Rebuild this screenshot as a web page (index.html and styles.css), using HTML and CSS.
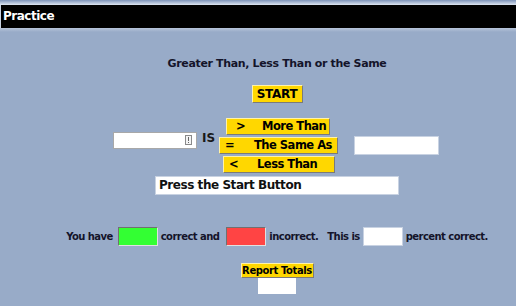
FILE: index.html
```html
<html>
    <head>
        <title>Practice</title>
        <link rel="stylesheet" href="styles.css">
    </head>
    <body>
        <div class="topStrip"></div>
        <div class="titleBar">Practice</div>
        <div class="underStrip"></div>
        <div id="main">
            <div class="heading">Greater Than, Less Than or the Same</div>
            <div class="startRow">
                <div class="btn startBtn">START</div>
            </div>
            <div class="quizRow">
                <div class="numBox">
                    <svg width="7" height="10" viewBox="0 0 7 10">
                        <rect x="0.5" y="0.5" width="6" height="9" fill="#f4f4f4" stroke="#8a8a8a"/>
                        <rect x="3" y="2" width="1" height="4" fill="#666"/>
                        <rect x="3" y="7" width="1" height="1" fill="#666"/>
                    </svg>
                </div>
                <div class="isText">IS</div>
                <div class="choices">
                    <div class="btn choice more"><span class="sym">&gt;</span><span>More Than</span></div>
                    <div class="btn choice same"><span class="sym">=</span><span>The Same As</span></div>
                    <div class="btn choice less"><span class="sym">&lt;</span><span>Less Than</span></div>
                </div>
                <div class="answerBox"></div>
            </div>
            <div class="messageRow">
                <div class="messageBox">Press the Start Button</div>
            </div>
            <div class="scoreRow">
                <span>You have</span>
                <div class="scoreBox green"></div>
                <span>correct and</span>
                <div class="scoreBox red"></div>
                <span>incorrect.</span>
                <span class="thisIs">This is</span>
                <div class="scoreBox white"></div>
                <span>percent correct.</span>
            </div>
            <div class="reportRow">
                <div class="btn reportBtn">Report Totals</div>
                <div class="reportBox"></div>
            </div>
        </div>
    </body>
</html>
```

FILE: styles.css
```css
body {
    margin: 0px;
    background-color: #98abc8;
    font-family: "DejaVu Sans", Tahoma, sans-serif;
    font-weight: bold;
    color: #111;
    height: 306px;
    overflow: hidden;
}
.topStrip {
    height: 5px;
    background: linear-gradient(#7d93b8, #dfe7f2);
}
.titleBar {
    height: 23px;
    background-color: #000;
    color: #fff;
    font-size: 12px;
    line-height: 23px;
    padding-left: 2px;
    border-left: 1px solid #c8d2e2;
    letter-spacing: -0.5px;
}
.underStrip {
    height: 4px;
    background: linear-gradient(#b7c5da, #98abc8);
}
#main {
    padding-left: 38px;
    display: flex;
    flex-direction: column;
    align-items: center;
}
.heading {
    margin-top: 25px;
    font-size: 11px;
    line-height: 14px;
    letter-spacing: -0.35px;
    color: #14142a;
}
.btn {
    background-color: #ffd700;
    border-top: 1px solid #fff2a8;
    border-left: 1px solid #fff2a8;
    border-right: 1px solid #7a7a7a;
    border-bottom: 1px solid #7a7a7a;
    color: #000;
    box-sizing: border-box;
    white-space: nowrap;
}
.startRow {
    margin-top: 14px;
}
.startBtn {
    width: 51px;
    height: 18px;
    font-size: 12px;
    line-height: 16px;
    text-align: center;
    letter-spacing: -0.3px;
}
.quizRow {
    margin-top: 15px;
    display: flex;
    align-items: flex-start;
    margin-right: 2px;
}
.numBox {
    margin-top: 14px;
    width: 84px;
    height: 17px;
    box-sizing: border-box;
    background-color: #fff;
    border: 1px solid #a8a8a8;
    display: flex;
    justify-content: flex-end;
    padding-top: 2px;
    padding-right: 4px;
}
.isText {
    margin-top: 13px;
    margin-left: 5px;
    font-size: 12px;
    width: 17px;
    color: #181818;
}
.choices {
    display: flex;
    flex-direction: column;
    align-items: flex-start;
    gap: 2px;
}
.choice {
    height: 17px;
    font-size: 11.5px;
    line-height: 15px;
    display: flex;
    letter-spacing: -0.5px;
}
.sym {
    flex: none;
}
.more {
    width: 104px;
    margin-left: 7px;
}
.more .sym {
    padding-left: 9px;
    width: 26px;
}
.same {
    width: 119px;
}
.same .sym {
    padding-left: 5px;
    width: 29px;
}
.less {
    width: 112px;
    margin-left: 4px;
}
.less .sym {
    padding-left: 5px;
    width: 28px;
}
.answerBox {
    margin-top: 18px;
    margin-left: 16px;
    width: 85px;
    height: 19px;
    background-color: #fff;
    border: 1px solid #c8d2e2;
    box-sizing: border-box;
}
.messageRow {
    margin-top: 3px;
}
.messageBox {
    width: 244px;
    height: 19px;
    box-sizing: border-box;
    background-color: #fff;
    border: 1px solid #c8d2e2;
    font-size: 12px;
    line-height: 17px;
    padding-left: 3px;
    letter-spacing: -0.45px;
}
.scoreRow {
    margin-top: 32px;
    display: flex;
    align-items: center;
    font-size: 10px;
    letter-spacing: -0.55px;
    gap: 3px;
    color: #14142a;
}
.scoreBox {
    width: 40px;
    height: 19px;
    box-sizing: border-box;
    border-top: 1px solid #707070;
    border-left: 1px solid #707070;
    border-right: 1px solid #e0e0e0;
    border-bottom: 1px solid #e0e0e0;
}
.green {
    background-color: #33ff33;
    margin-left: 2px;
}
.red {
    background-color: #ff4444;
    margin-left: 4px;
}
.white {
    background-color: #fff;
    border: 1px solid #c8d2e2;
}
.thisIs {
    margin-left: 6px;
}
.reportRow {
    margin-top: 17px;
    display: flex;
    flex-direction: column;
    align-items: center;
}
.reportBtn {
    width: 73px;
    height: 15px;
    font-size: 10px;
    line-height: 13px;
    text-align: center;
    letter-spacing: -0.4px;
}
.reportBox {
    width: 38px;
    height: 16px;
    background-color: #fff;
}
```
